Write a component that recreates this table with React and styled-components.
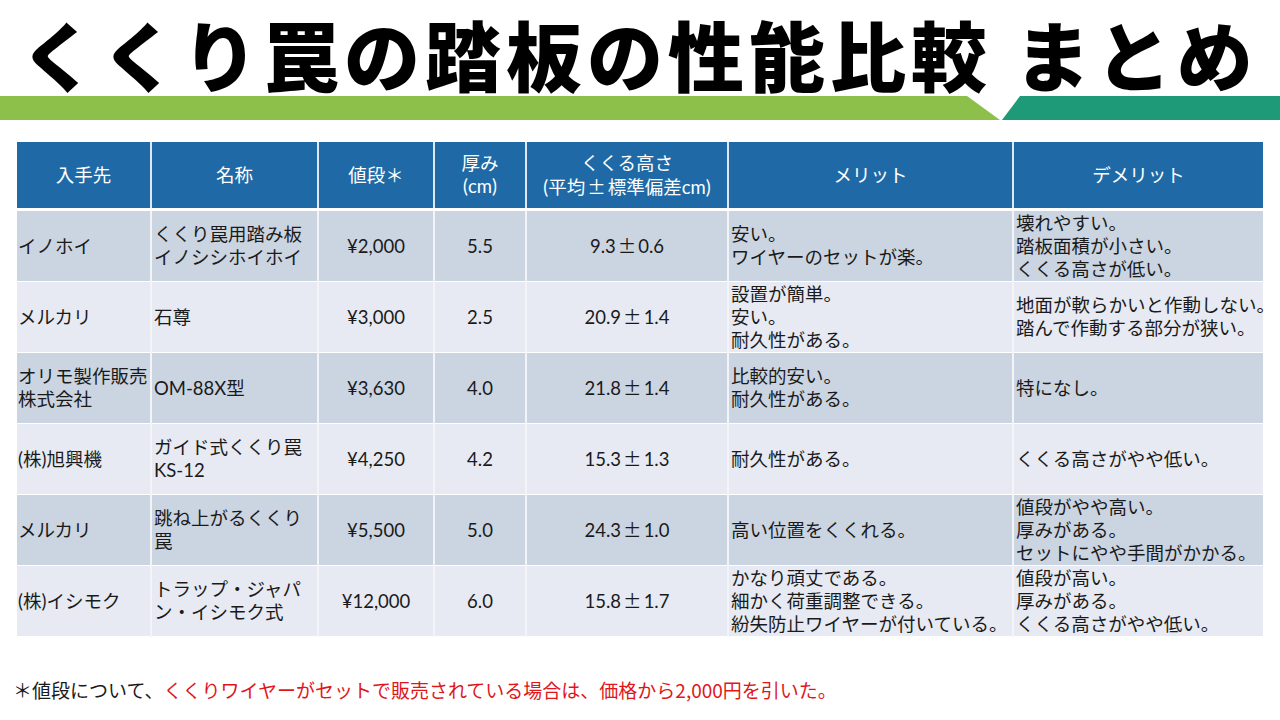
import React from 'react';
import styled, { createGlobalStyle } from 'styled-components';

const GlobalStyle = createGlobalStyle`
  html, body {
    margin: 0;
    padding: 0;
    background: #ffffff;
  }
  body {
    width: 1280px;
    height: 720px;
    overflow: hidden;
    font-family: "Noto Sans CJK JP", "Noto Sans", sans-serif;
  }
`;

const Slide = styled.div`
  width: 1280px;
  height: 720px;
  display: flex;
  flex-direction: column;
`;

const Title = styled.h1`
  box-sizing: border-box;
  margin: 0;
  height: 96px;
  padding: 15px 0 0 20px;
  font-family: "Noto Sans CJK JP", sans-serif;
  font-weight: 900;
  font-size: 76px;
  line-height: 76px;
  color: #000;
  white-space: nowrap;
  letter-spacing: 5px;
`;

const Bars = styled.div`
  display: flex;
  gap: 2px;
  height: 24px;
`;

const LimeBar = styled.div`
  width: 1000px;
  background: #8cc04b;
  clip-path: polygon(0 0, 967px 0, 100% 100%, 0 100%);
`;

const TealBar = styled.div`
  flex: 1;
  background: #1e9a78;
  clip-path: polygon(18px 0, 100% 0, 100% 100%, 0 100%);
`;

const Table = styled.table`
  margin: 22px 0 0 17px;
  width: 1246px;
  border-collapse: collapse;
  table-layout: fixed;
  font-family: "Lato", "Noto Sans CJK JP", sans-serif;
  font-size: 18.5px;
  line-height: 23px;
  color: #1a1a1a;
`;

const HeadCell = styled.th`
  background: #1f6aa6;
  color: #ffffff;
  font-weight: 400;
  height: 66px;
  padding: 0 2px;
  text-align: center;
  border-left: 2px solid #dfe8f2;
  border-bottom: 3px solid #ffffff;
  &:first-child { border-left: none; }
`;

const Row = styled.tr`
  background: ${(p) => (p.$odd ? '#cbd4e1' : '#e7eaf2')};
`;

const Cell = styled.td`
  height: 70px;
  padding: 0 2px;
  text-align: ${(p) => (p.$center ? 'center' : 'left')};
  vertical-align: middle;
  white-space: nowrap;
  overflow: visible;
  border-left: 2px solid #f2f4f8;
  border-bottom: 1px solid #ffffff;
  &:first-child { border-left: none; padding-left: 1px; }
`;

const Sign = styled.span`
  font-family: "Noto Sans CJK JP", sans-serif;
  margin: 0 2px;
`;

const Footnote = styled.p`
  margin: 39px 0 0 13px;
  font-family: "Noto Sans CJK JP", sans-serif;
  font-size: 19px;
  color: #1a1a1a;
  white-space: nowrap;
`;

const Red = styled.span`
  color: #e0161b;
`;

const cols = [134, 167, 116, 92, 202, 285, 250];

const rows = [
  ['イノホイ', 'くくり罠用踏み板\nイノシシホイホイ', '¥2,000', '5.5', '9.3±0.6', '安い。\nワイヤーのセットが楽。', '壊れやすい。\n踏板面積が小さい。\nくくる高さが低い。'],
  ['メルカリ', '石尊', '¥3,000', '2.5', '20.9±1.4', '設置が簡単。\n安い。\n耐久性がある。', '地面が軟らかいと作動しない。\n踏んで作動する部分が狭い。'],
  ['オリモ製作販売\n株式会社', 'OM-88X型', '¥3,630', '4.0', '21.8±1.4', '比較的安い。\n耐久性がある。', '特になし。'],
  ['(株)旭興機', 'ガイド式くくり罠\nKS-12', '¥4,250', '4.2', '15.3±1.3', '耐久性がある。', 'くくる高さがやや低い。'],
  ['メルカリ', '跳ね上がるくくり\n罠', '¥5,500', '5.0', '24.3±1.0', '高い位置をくくれる。', '値段がやや高い。\n厚みがある。\nセットにやや手間がかかる。'],
  ['(株)イシモク', 'トラップ・ジャパ\nン・イシモク式', '¥12,000', '6.0', '15.8±1.7', 'かなり頑丈である。\n細かく荷重調整できる。\n紛失防止ワイヤーが付いている。', '値段が高い。\n厚みがある。\nくくる高さがやや低い。'],
];

const centered = [false, false, true, true, true, false, false];

const withSign = (line) => {
  const parts = line.split('±');
  if (parts.length === 1) return line;
  return (
    <>
      {parts[0]}
      <Sign>±</Sign>
      {parts[1]}
    </>
  );
};

const Lines = ({ text }) =>
  text.split('\n').map((line, i) => (
    <React.Fragment key={i}>
      {i > 0 && <br />}
      {withSign(line)}
    </React.Fragment>
  ));

export default function App() {
  return (
    <>
      <GlobalStyle />
      <Slide>
        <Title>くくり罠の踏板の性能比較 まとめ</Title>
        <Bars>
          <LimeBar />
          <TealBar />
        </Bars>
        <Table>
          <colgroup>
            {cols.map((w, i) => (
              <col key={i} style={{ width: w }} />
            ))}
          </colgroup>
          <thead>
            <tr>
              <HeadCell>入手先</HeadCell>
              <HeadCell>名称</HeadCell>
              <HeadCell>値段＊</HeadCell>
              <HeadCell>厚み<br />(cm)</HeadCell>
              <HeadCell><Lines text={'くくる高さ\n(平均±標準偏差cm)'} /></HeadCell>
              <HeadCell>メリット</HeadCell>
              <HeadCell>デメリット</HeadCell>
            </tr>
          </thead>
          <tbody>
            {rows.map((row, r) => (
              <Row key={r} $odd={r % 2 === 0}>
                {row.map((cell, c) => (
                  <Cell key={c} $center={centered[c]}>
                    <Lines text={cell} />
                  </Cell>
                ))}
              </Row>
            ))}
          </tbody>
        </Table>
        <Footnote>
          ＊値段について、<Red>くくりワイヤーがセットで販売されている場合は、価格から2,000円を引いた。</Red>
        </Footnote>
      </Slide>
    </>
  );
}
